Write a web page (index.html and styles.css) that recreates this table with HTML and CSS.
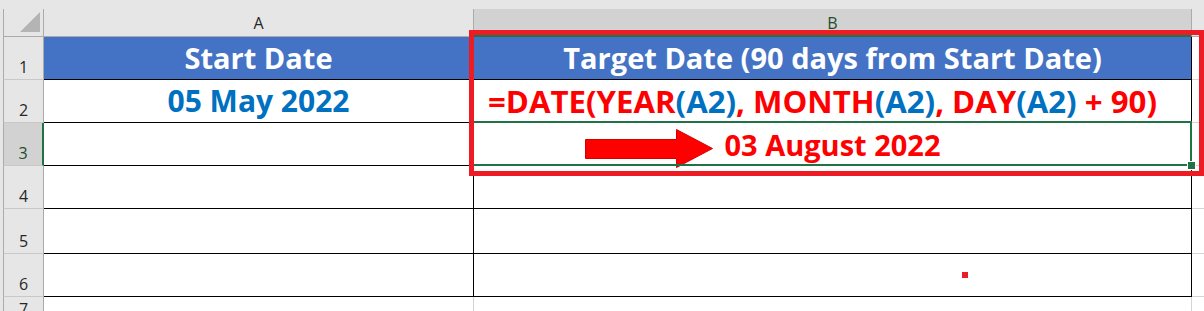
FILE: index.html
```html
<!DOCTYPE html>
<html lang="en">
<head>
<meta charset="utf-8">
<title>DATE formula</title>
<link rel="stylesheet" href="styles.css">
</head>
<body>
<div class="sheet">
  <div class="row hdr">
    <div class="rh corner"><svg class="tri" width="20" height="20" viewBox="0 0 20 20"><polygon points="20,0 20,20 0,20" fill="#b4b4b4"/></svg></div>
    <div class="ch a">A</div>
    <div class="ch b">B</div>
    <div class="ch c"></div>
  </div>
  <div class="row r1">
    <div class="rh">1</div>
    <div class="cell a title">Start Date</div>
    <div class="cell b title">Target Date (90 days from Start Date)</div>
    <div class="cell c"></div>
  </div>
  <div class="row r2">
    <div class="rh">2</div>
    <div class="cell a date">05 May 2022</div>
    <div class="cell b formula"><span class="red">=DATE(YEAR</span><span class="blue">(A2)</span><span class="red">, MONTH</span><span class="blue">(A2)</span><span class="red">, DAY</span><span class="blue">(A2)</span><span class="red">&nbsp;+ 90)</span></div>
    <div class="cell c"></div>
  </div>
  <div class="row r3">
    <div class="rh sel">3</div>
    <div class="cell a"></div>
    <div class="cell b result active"><span class="txt"><svg class="arrow" width="128" height="39" viewBox="0 0 128 39"><polygon points="0.5,10.5 91.5,10.5 91.5,0.5 127.5,19.5 91.5,38.5 91.5,29.5 0.5,29.5" fill="#ff0000" stroke="#d40000" stroke-width="1"/></svg>03 August 2022</span></div>
    <div class="cell c"></div>
  </div>
  <div class="row r4">
    <div class="rh">4</div>
    <div class="cell a"></div>
    <div class="cell b"></div>
    <div class="cell c"></div>
  </div>
  <div class="row r5">
    <div class="rh">5</div>
    <div class="cell a"></div>
    <div class="cell b"></div>
    <div class="cell c"></div>
  </div>
  <div class="row r6">
    <div class="rh">6</div>
    <div class="cell a"></div>
    <div class="cell b"></div>
    <div class="cell c"></div>
  </div>
  <div class="row r7">
    <div class="rh">7</div>
    <div class="cell a"></div>
    <div class="cell b"></div>
    <div class="cell c"></div>
  </div>
</div>
<div class="redbox"></div>
<div class="dot"></div>
</body>
</html>
```
FILE: styles.css
```css
* { box-sizing: border-box; }
html, body { margin: 0; }
body {
  width: 1204px;
  height: 311px;
  overflow: hidden;
  background: #e6e6e6;
  font-family: "Open Sans", "Liberation Sans", sans-serif;
  position: relative;
}
.sheet {
  padding: 9px 0 0 3px;
  display: flex;
  flex-direction: column;
}
.row { display: flex; flex: none; }
.hdr { height: 28px; }
.r1, .r2, .r3, .r4, .r6 { height: 43px; }
.r5 { height: 45px; }
.r7 { height: 20px; }

.rh {
  width: 41px;
  flex: none;
  background: #e6e6e6;
  border-left: 1px solid #ababab;
  border-right: 1px solid #ababab;
  border-bottom: 1px solid #c8c8c8;
  display: flex;
  justify-content: center;
  align-items: flex-end;
  padding-bottom: 4px;
  font-size: 16px;
  line-height: 1;
  color: #262626;
}
.rh.sel {
  background: #d2d2d2;
  border-right: 2px solid #217346;
  color: #1e4d2b;
}
.corner {
  border-bottom-color: #ababab;
  align-items: flex-start;
  justify-content: flex-start;
  padding: 3px 0 0 16px;
}
.r7 .rh { border-bottom: none; align-items: flex-start; padding: 4px 0 0; }

.ch {
  display: flex;
  align-items: center;
  justify-content: center;
  font-size: 16px;
  line-height: 1;
  color: #262626;
  background: #e6e6e6;
  border-right: 1px solid #ababab;
  border-bottom: 1px solid #ababab;
  padding-top: 1px;
}
.ch.a { width: 430px; }
.ch.b {
  width: 718px;
  background: #d2d2d2;
  border-bottom: 2px solid #217346;
  color: #1e4d2b;
}
.ch.c { flex: 1; border-right: none; }

.cell {
  background: #fff;
  display: flex;
  justify-content: center;
  align-items: flex-end;
  border-right: 1px solid #000;
  border-bottom: 1px solid #000;
  font-weight: 700;
  line-height: 1;
  white-space: nowrap;
}
.cell.a { width: 430px; }
.cell.b { width: 718px; }
.cell.c { flex: 1; border-right: none; border-bottom-color: #d4d4d4; }
.r7 .cell { border-color: #d4d4d4; border-bottom: none; }

.title {
  background: #4472c4;
  color: #fff;
  font-size: 29px;
  padding-bottom: 7px;
}
.date {
  color: #0070c0;
  font-size: 30px;
  padding-bottom: 6px;
}
.formula {
  font-size: 31.2px;
  padding-bottom: 5px;
  padding-right: 20px;
}
.red { color: #ff0000; }
.blue { color: #0070c0; }

.result {
  color: #ff0000;
  font-size: 29px;
  padding-bottom: 6px;
}
.active { position: relative; }
.active::after {
  content: "";
  position: absolute;
  left: -2px;
  top: -2px;
  right: -1px;
  bottom: -1px;
  border: 2px solid #217346;
}
.active::before {
  content: "";
  position: absolute;
  right: -5px;
  bottom: -5px;
  width: 7px;
  height: 7px;
  background: #217346;
  border: 1px solid #fff;
  z-index: 1;
}
.txt { position: relative; }
.arrow {
  position: absolute;
  right: calc(100% + 11px);
  top: -1px;
}

.redbox {
  position: absolute;
  left: 469px;
  top: 30px;
  width: 735px;
  height: 146px;
  border: 5px solid #ed1c24;
  z-index: 2;
}
.dot {
  position: absolute;
  left: 962px;
  top: 272px;
  width: 6px;
  height: 6px;
  background: #ed1c24;
}
```
